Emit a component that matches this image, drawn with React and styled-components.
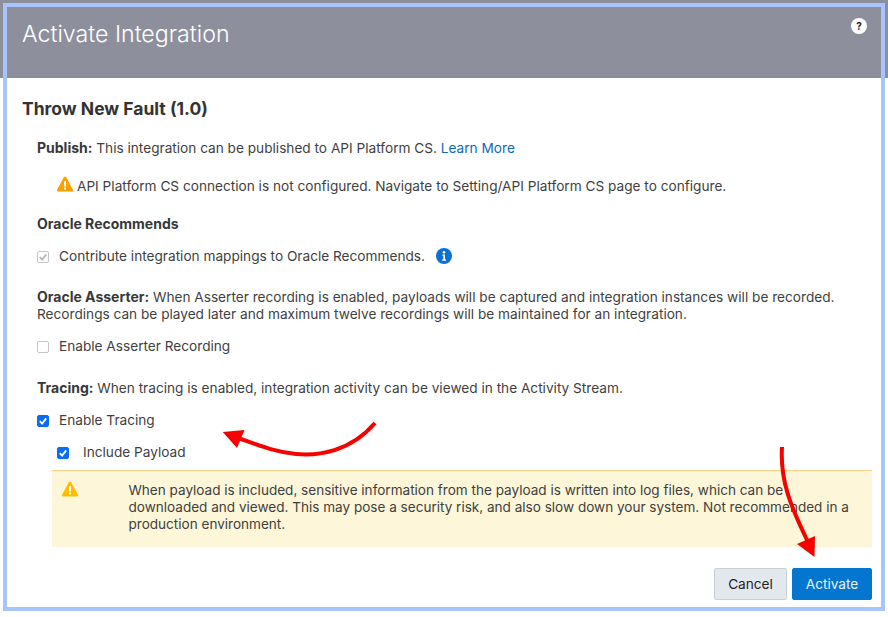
import styled, { createGlobalStyle } from 'styled-components';

const GlobalStyle = createGlobalStyle`
  html, body {
    margin: 0;
    padding: 0;
    background: #fff;
  }
  body {
    font-family: Inter, "Liberation Sans", sans-serif;
    font-size: 13.65px;
    line-height: 17px;
    color: #3f3f3f;
  }
  b {
    font-size: 14px;
    line-height: 1;
    font-weight: 700;
    color: #383838;
  }
`;

const Page = styled.div`
  position: relative;
  width: 888px;
  height: 617px;
  overflow: hidden;
`;

const Header = styled.header`
  display: flex;
  justify-content: space-between;
  align-items: flex-start;
  height: 78px;
  box-sizing: border-box;
  padding: 18px 21px 0 22px;
  background: #8e8f9c;
`;

const Title = styled.h1`
  margin: 0;
  font-size: 23.2px;
  line-height: 32px;
  font-weight: 300;
  color: #fff;
`;

const Help = styled.span`
  display: flex;
  align-items: center;
  justify-content: center;
  width: 16px;
  height: 16px;
  border-radius: 50%;
  background: #fff;
  color: #222;
  font-size: 10px;
  line-height: 16px;
  font-weight: 700;
`;

const Body = styled.main`
  padding: 20px 16px 0 22px;
`;

const Heading = styled.h2`
  margin: 0;
  font-size: 17.5px;
  line-height: 22px;
  font-weight: 700;
  color: #333;
`;

const Section = styled.div`
  margin: ${(p) => p.$top || 0}px 0 0 15px;
`;

const Row = styled.div`
  display: flex;
  align-items: center;
  margin-left: ${(p) => p.$left || 0}px;
`;

const Box = styled.span`
  display: flex;
  align-items: center;
  justify-content: center;
  flex: none;
  width: 12px;
  height: 12px;
  box-sizing: border-box;
  border-radius: 2px;
  margin-right: ${(p) => p.$gap}px;
  border: 1px solid ${(p) => (p.$on ? '#0a6cf0' : '#c4c6c8')};
  background: ${(p) => (p.$on ? '#0a6cf0' : '#fff')};
  color: ${(p) => (p.$on ? '#fff' : '#b4b6b8')};
`;

const Link = styled.a`
  color: #0f6ab4;
`;

const Banner = styled.div`
  display: flex;
  margin: 9px 0 0 30px;
  height: 77px;
  box-sizing: border-box;
  padding: 11px 16px 0 10px;
  font-size: 13.55px;
  background: #fdf6d9;
  border-top: 1px solid #fdd08a;
`;

const BannerIcon = styled.span`
  flex: none;
  width: 66.5px;
  height: 16px;
`;

const Footer = styled.div`
  display: flex;
  justify-content: flex-end;
  gap: 5px;
  margin-top: 21px;
`;

const Button = styled.button`
  height: 32px;
  width: ${(p) => p.$width}px;
  padding: 0;
  border-radius: 2px;
  font: 400 13.65px/17px Inter, "Liberation Sans", sans-serif;
  border: 1px solid ${(p) => (p.$primary ? '#0476d0' : '#c5d0d8')};
  background: ${(p) => (p.$primary ? '#0476d0' : '#e3e8ec')};
  color: ${(p) => (p.$primary ? '#e8f2fb' : '#1d2328')};
`;

const InfoIcon = styled.svg`
  margin-left: 11px;
  margin-top: -2px;
`;

const WarnIcon = styled.svg`
  display: block;
  flex: none;
  margin-right: ${(p) => p.$gap || 0}px;
  margin-top: ${(p) => p.$shift || 0}px;
`;

/* annotation layer painted on top of the dialog */
const Frame = styled.div`
  position: absolute;
  left: 3px;
  top: 2.5px;
  width: 882px;
  height: 608.5px;
  box-sizing: border-box;
  border: 4.5px solid #a7c4fd;
  pointer-events: none;
`;

const Arrows = styled.svg`
  position: absolute;
  left: 0;
  top: 0;
  pointer-events: none;
`;

const Check = () => (
  <svg width="10" height="10" viewBox="0 0 10 10" fill="none">
    <path d="M1.8 5.2 4.1 7.6 8.2 2.4" stroke="currentColor" strokeWidth="1.8" />
  </svg>
);

const Warning = ({ color, gap, shift }) => (
  <WarnIcon $gap={gap} $shift={shift} width="16" height="16" viewBox="0 0 16 16">
    <path
      d="M6.9 1.1a1.3 1.3 0 0 1 2.2 0L15.8 13.6a1.2 1.2 0 0 1-1.1 1.9H1.3a1.2 1.2 0 0 1-1.1-1.9Z"
      fill={color}
    />
    <rect x="7" y="5" width="2" height="5.6" rx=".6" fill="#fff" />
    <circle cx="8" cy="12.6" r="1.15" fill="#fff" />
  </WarnIcon>
);

const App = () => (
  <Page>
    <GlobalStyle />
    <Header>
      <Title>Activate Integration</Title>
      <Help>?</Help>
    </Header>
    <Body>
      <Heading>Throw New Fault (1.0)</Heading>
      <Section $top={20}>
        <b>Publish:</b> This integration can be published to API Platform CS. <Link>Learn More</Link>
      </Section>
      <Section $top={21}>
        <Row $left={20}>
          <Warning color="#ffa000" gap={4} shift={-5} />
          API Platform CS connection is not configured. Navigate to Setting/API Platform CS page to configure.
        </Row>
      </Section>
      <Section $top={21}>
        <b>Oracle Recommends</b>
      </Section>
      <Section $top={15}>
        <Row>
          <Box $gap={10}>
            <Check />
          </Box>
          Contribute integration mappings to Oracle Recommends.
          <InfoIcon width="16" height="16" viewBox="0 0 16 16">
            <circle cx="8" cy="8" r="8" fill="#0a72d4" />
            <circle cx="8" cy="4.3" r="1.3" fill="#fff" />
            <path d="M6.4 6.6h2.6v5h1v1.2H6.2v-1.2h1.1V7.8h-.9Z" fill="#fff" />
          </InfoIcon>
        </Row>
      </Section>
      <Section $top={24}>
        <b>Oracle Asserter:</b> When Asserter recording is enabled, payloads will be captured and integration instances will be recorded.
        <br />
        Recordings can be played later and maximum twelve recordings will be maintained for an integration.
      </Section>
      <Section $top={15}>
        <Row>
          <Box $gap={10} />
          Enable Asserter Recording
        </Row>
      </Section>
      <Section $top={25}>
        <b>Tracing:</b> When tracing is enabled, integration activity can be viewed in the Activity Stream.
      </Section>
      <Section $top={15}>
        <Row>
          <Box $on $gap={10}>
            <Check />
          </Box>
          Enable Tracing
        </Row>
      </Section>
      <Section $top={15}>
        <Row $left={20}>
          <Box $on $gap={14}>
            <Check />
          </Box>
          Include Payload
        </Row>
      </Section>
      <Banner>
        <BannerIcon>
          <Warning color="#fdbe00" shift={-1} />
        </BannerIcon>
        <div>
          When payload is included, sensitive information from the payload is written into log files, which can be downloaded and viewed. This may pose a security risk, and also slow down your system. Not recommended in a production environment.
        </div>
      </Banner>
      <Footer>
        <Button $width={73}>Cancel</Button>
        <Button $width={80} $primary>Activate</Button>
      </Footer>
    </Body>
    <Frame />
    <Arrows width="888" height="617" viewBox="0 0 888 617" fill="none">
      <path d="M375 423C350 452 318 456 296 454C275 452 258 445 238 438" stroke="#f60000" strokeWidth="4" />
      <path d="M222.7 432 244.5 430 237 448Z" fill="#f60000" />
      <path d="M782 447C780 480 790 505 808 542" stroke="#f60000" strokeWidth="4" />
      <path d="M814.5 557 815 536 797 544Z" fill="#f60000" />
    </Arrows>
  </Page>
);

export default App;
